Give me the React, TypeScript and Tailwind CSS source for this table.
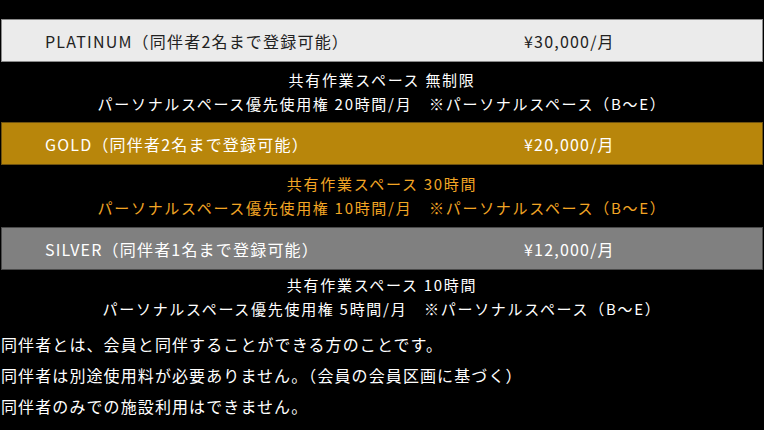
import React from "react";

const font = { fontFamily: '"Noto Sans CJK JP", "Noto Sans", sans-serif' };

function Bar({ name, price, cls }: { name: string; price: string; cls: string }) {
  return (
    <div className={`mx-[1px] h-[43px] border flex items-center text-[16px] tracking-[1.2px] ${cls}`}>
      <div className="w-[522px] pl-[43px] whitespace-nowrap">{name}</div>
      <div className="whitespace-nowrap">{price}</div>
    </div>
  );
}

export default function App() {
  return (
    <div className="w-[764px] h-[430px] bg-black overflow-hidden pt-[19px]" style={font}>
      <Bar
        name="PLATINUM（同伴者2名まで登録可能）"
        price="¥30,000/月"
        cls="bg-[#ebebeb] border-[#8a8a8a] text-[#222]"
      />
      <div className="pt-[6px] pb-[6px] text-center text-white text-[15px] leading-[24px] tracking-[1.7px]">
        <div>共有作業スペース 無制限</div>
        <div>パーソナルスペース優先使用権 20時間/月　※パーソナルスペース（B〜E）</div>
      </div>
      <Bar
        name="GOLD（同伴者2名まで登録可能）"
        price="¥20,000/月"
        cls="bg-[#b8860b] border-[#6e5210] text-white"
      />
      <div className="pt-[7px] pb-[7px] text-center text-[#f2a524] text-[15px] leading-[24px] tracking-[1.7px]">
        <div>共有作業スペース 30時間</div>
        <div>パーソナルスペース優先使用権 10時間/月　※パーソナルスペース（B〜E）</div>
      </div>
      <Bar
        name="SILVER（同伴者1名まで登録可能）"
        price="¥12,000/月"
        cls="bg-[#808080] border-[#4a4a4a] text-white"
      />
      <div className="pt-[3px] text-center text-white text-[15px] leading-[24px] tracking-[1.7px]">
        <div>共有作業スペース 10時間</div>
        <div>パーソナルスペース優先使用権 5時間/月　※パーソナルスペース（B〜E）</div>
      </div>
      <div className="mt-[8px] pl-[1px] text-white text-[16px] leading-[31px] tracking-[1.1px]">
        <div>同伴者とは、会員と同伴することができる方のことです。</div>
        <div>同伴者は別途使用料が必要ありません。（会員の会員区画に基づく）</div>
        <div>同伴者のみでの施設利用はできません。</div>
      </div>
    </div>
  );
}
